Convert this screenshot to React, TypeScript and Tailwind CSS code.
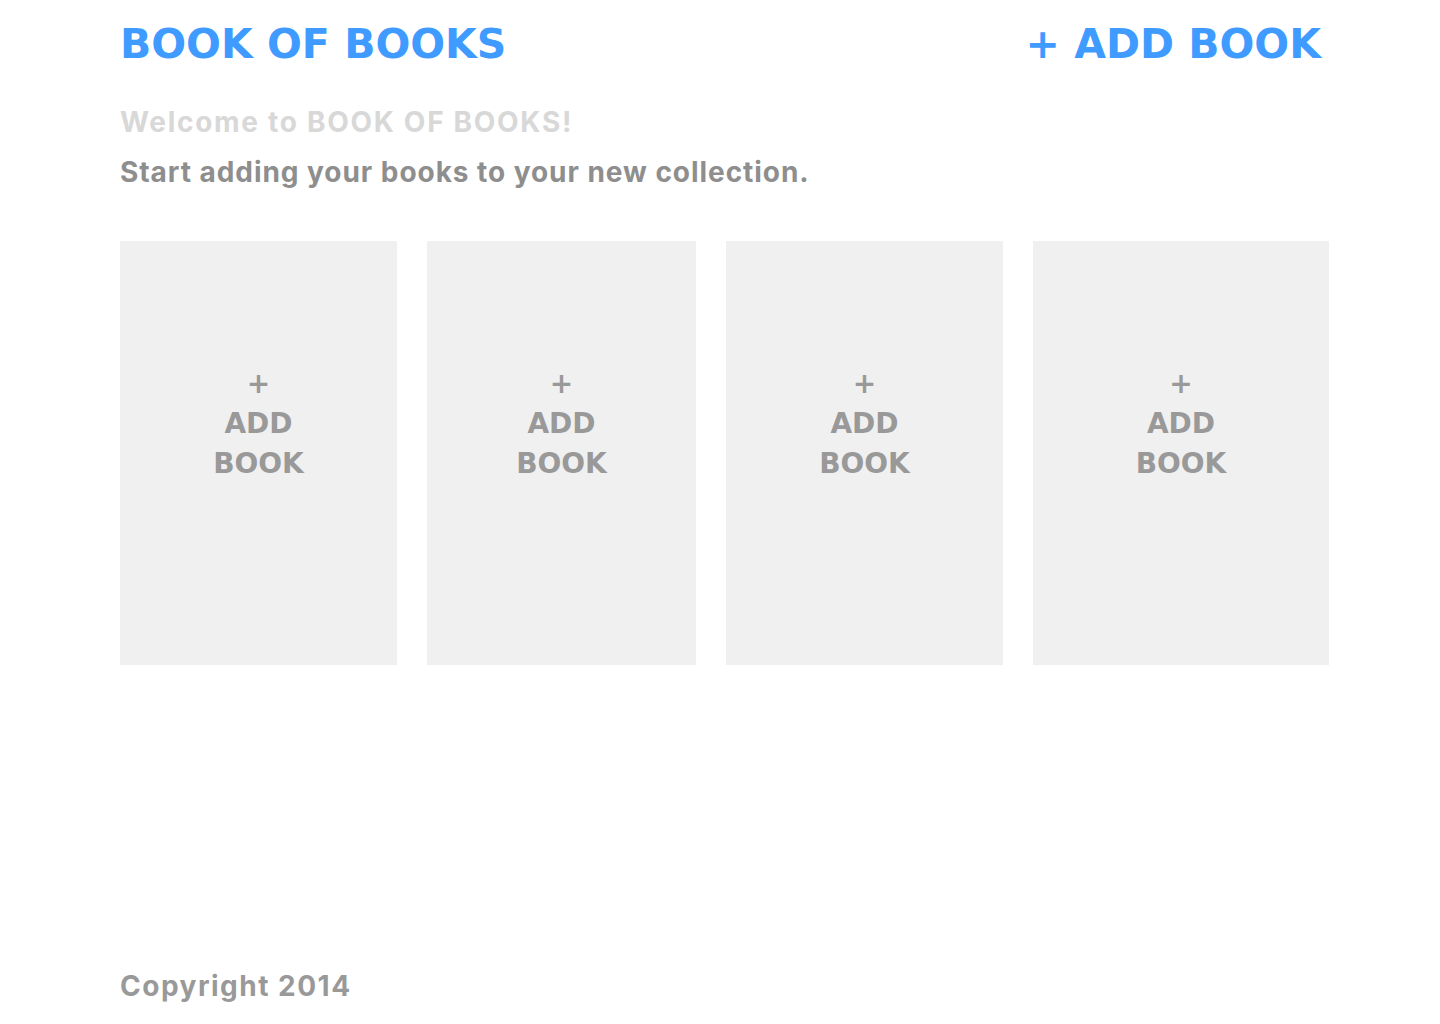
import React from "react";

const font = { fontFamily: "Inter, 'Liberation Sans', sans-serif" };
const capsFont = { fontFamily: "'DejaVu Sans', Inter, sans-serif" };

function BookSlot({ width }: { width: string }) {
  return (
    <div style={capsFont} className={`${width} shrink-0 h-[424px] bg-[#f0f0f0] flex flex-col items-center justify-center pb-[48px] text-[#999999] font-bold text-[28px] leading-[40px] text-center`}>
      <span className="leading-[20px] mb-[10px]">+</span>
      <span>ADD</span>
      <span>BOOK</span>
    </div>
  );
}

export default function App() {
  return (
    <div style={font} className="min-h-screen w-[1440px] bg-white flex flex-col pl-[120px] pr-[111px]">
      {/* Header */}
      <header style={capsFont} className="flex items-center justify-between pt-[19px] pr-[8px]">
        <h1 className="text-[41px] leading-[50px] font-bold text-[#3f9bff]">BOOK OF BOOKS</h1>
        <a href="#" className="text-[41px] leading-[50px] font-bold text-[#3f9bff]">+ ADD BOOK</a>
      </header>

      {/* Welcome */}
      <div className="mt-[33px] font-bold">
        <p className="text-[28px] leading-[40px] tracking-[1.7px] text-[#d8d8d8]">Welcome to BOOK OF BOOKS!</p>
        <p className="text-[28px] leading-[40px] tracking-[0.95px] text-[#8e8e8e] mt-[10px]">Start adding your books to your new collection.</p>
      </div>

      {/* Slots */}
      <div className="flex gap-[30px] mt-[49px]">
        <BookSlot width="w-[277px]" />
        <BookSlot width="w-[269px]" />
        <BookSlot width="w-[277px]" />
        <BookSlot width="w-[296px]" />
      </div>

      {/* Footer */}
      <footer className="mt-auto pb-[18px] text-[28px] leading-[40px] font-bold tracking-[1.5px] text-[#999999]">Copyright 2014</footer>
    </div>
  );
}
